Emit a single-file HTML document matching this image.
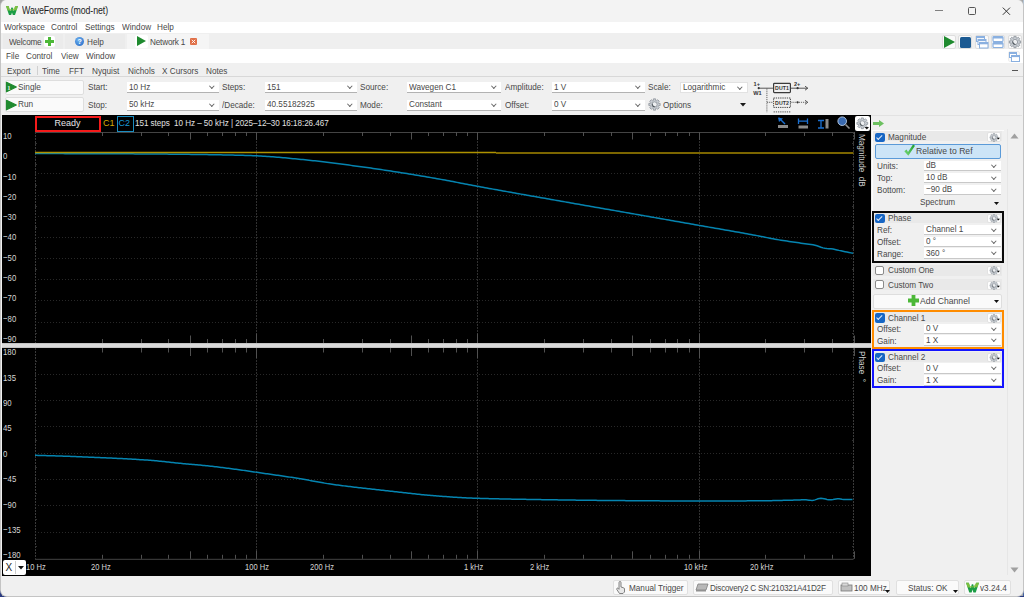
<!DOCTYPE html>
<html><head><meta charset="utf-8">
<style>
*{box-sizing:border-box;margin:0;padding:0}
html,body{width:1024px;height:597px;overflow:hidden;background:#9ea4aa}
body{position:relative;font-family:"Liberation Sans",sans-serif;font-size:9.3px;color:#484848}
.a{position:absolute}
.t{position:absolute;white-space:nowrap;line-height:10px;transform:scaleX(0.88);transform-origin:0 0}
.nt{transform:none}
.dd{position:absolute;background:#fff;border-bottom:1px solid #b2b2b2;height:11px}
.dd span{position:absolute;left:2px;top:-0.2px;line-height:10px;white-space:nowrap;transform:scaleX(0.88);transform-origin:0 0}
.dd i{position:absolute;right:5px;top:2.2px;width:3.6px;height:3.6px;border-right:0.9px solid #6a6a6a;border-bottom:0.9px solid #6a6a6a;transform:rotate(45deg)}
.btn{position:absolute;background:#fafafa;border:1px solid #dedede;border-radius:2px}
.al{position:absolute;left:2.8px;white-space:nowrap;font-size:9.5px;line-height:10px;color:#d6d6d6;transform:scaleX(0.82);transform-origin:0 0}
.xl{position:absolute;top:561.5px;white-space:nowrap;font-size:9.1px;line-height:10px;color:#d6d6d6;transform:scaleX(0.83);transform-origin:0 0}
.tri{position:absolute;width:0;height:0;border-style:solid;border-color:transparent transparent transparent #1f8a2f}
.cb{position:absolute;width:9.5px;height:9.5px;border-radius:2px;background:#1766c4}
.cb:after{content:"";position:absolute;left:3.3px;top:1.3px;width:2.2px;height:4.5px;border-right:0.8px solid #dfe8f5;border-bottom:0.8px solid #dfe8f5;transform:rotate(45deg)}
.cbe{position:absolute;width:9px;height:9px;border-radius:2px;background:#fff;border:1px solid #8a8a8a}
.grp{position:absolute;left:872px;width:132px;background:#f0f0f0}
.hdr{position:absolute;left:873px;width:129px;height:10px;background:#e9e9e9}
.gb{position:absolute;left:986.5px;width:14.5px;height:9.5px;background:#fff;border:1px solid #e2e2e2;border-radius:2px}
.lbl{position:absolute;left:877px;white-space:nowrap;line-height:10px;transform:scaleX(0.88);transform-origin:0 0}
.sb{position:absolute;top:580px;height:15px;background:#fafafa;border:1px solid #e0e0e0;border-radius:2px}
.sb span{position:absolute;top:2px;line-height:10px;white-space:nowrap;transform:scaleX(0.88);transform-origin:0 0}
</style></head><body>
<svg width="0" height="0" style="position:absolute"><defs>
<g id="gear"><path d="M3.44,-1.05 L4.91,-0.95 L4.91,0.95 L3.44,1.05 L3.18,1.69 L4.15,2.80 L2.80,4.15 L1.69,3.18 L1.05,3.44 L0.95,4.91 L-0.95,4.91 L-1.05,3.44 L-1.69,3.18 L-2.80,4.15 L-4.15,2.80 L-3.18,1.69 L-3.44,1.05 L-4.91,0.95 L-4.91,-0.95 L-3.44,-1.05 L-3.18,-1.69 L-4.15,-2.80 L-2.80,-4.15 L-1.69,-3.18 L-1.05,-3.44 L-0.95,-4.91 L0.95,-4.91 L1.05,-3.44 L1.69,-3.18 L2.80,-4.15 L4.15,-2.80 L3.18,-1.69 Z" fill="#c9ced4" stroke="#8b9299" stroke-width="0.7" stroke-linejoin="round"/><circle r="2.3" fill="#eef0f2" stroke="#7a828a" stroke-width="0.6"/><path d="M-1.6,-1.2 A2,2 0 0 0 0.9,1.9 A2.6,2.6 0 0 1 -1.6,-1.2 Z" fill="#4a5258"/></g>
</defs></svg>
<div class="a" style="left:0;top:0;width:1024px;height:1px;background:#a4a4a4"></div>
<div class="a" style="left:553px;top:0;width:178px;height:1px;background:#5a88c4"></div>
<div class="a" style="left:0;top:0;width:1.5px;height:597px;background:linear-gradient(#a0a0a0 0,#a0a0a0 70px,#4a4a4a 80px,#4a4a4a 140px,#b0b0b0 150px,#b0b0b0 560px,#2a3a80 571px,#2a3a80 597px)"></div>
<div class="a" style="left:1022.5px;top:0;width:1.5px;height:597px;background:linear-gradient(#b4c4d4 0,#b4c4d4 28px,#c8a040 32px,#506080 60px,#c0a050 100px,#405a90 160px,#4060a0 597px)"></div>
<div class="a" style="left:0;top:595.5px;width:1024px;height:1.5px;background:linear-gradient(90deg,#2a3a80 0,#2a3a80 55px,#b89a50 56px,#b89a50 69px,#606880 70px,#606880 85px,#2a3a80 86px,#2a3a80 1024px)"></div>
<div class="a" id="win" style="left:1px;top:0;width:1022px;height:596px;background:#f0f0f0;border-radius:6px;overflow:hidden;box-shadow:0 0 0 1px #c4c4c4">
<div style="position:absolute;left:-1px;top:0;width:1024px;height:597px">
  <!-- title bar -->
  <div class="a" style="left:0;top:0;width:1024px;height:21.6px;background:#f3f3f3"></div>
  <svg class="a" style="left:6px;top:6px" width="12" height="9" viewBox="0 0 12 9">
    <path d="M0,0 L2.6,0 L4.2,5.2 L5.4,1.6 L6.6,1.6 L7.8,5.2 L9.4,0 L12,0 L9,9 L6.8,9 L6,6.4 L5.2,9 L3,9 Z" fill="#1b9d45"/>
    <path d="M0,0 L2.6,0 L3.6,3.2 L7,3.6 L9.4,0 L12,0 L10.6,4.2 L1.6,4.4 Z" fill="#8cc63f" opacity="0.85"/>
  </svg>
  <div class="t" style="left:22px;top:5.5px;font-size:10px;color:#1c1c1c;letter-spacing:-0.1px">WaveForms (mod-net)</div>
  <div class="a" style="left:935px;top:10px;width:7.5px;height:1px;background:#808080"></div>
  <div class="a" style="left:968px;top:6.8px;width:7.8px;height:7.8px;border:1.1px solid #555;border-radius:1.5px"></div>
  <svg class="a" style="left:1002px;top:6.5px" width="9" height="9" viewBox="0 0 9 9"><path d="M0.8,0.6 L8,7.8 M8,0.6 L0.8,7.8" stroke="#333" stroke-width="1"/></svg>
  <!-- menu -->
  <div class="a" style="left:0;top:21.6px;width:1024px;height:11.4px;background:#fff"></div>
  <div class="t" style="left:4px;top:22px">Workspace</div>
  <div class="t" style="left:51px;top:22px">Control</div>
  <div class="t" style="left:85px;top:22px">Settings</div>
  <div class="t" style="left:122px;top:22px">Window</div>
  <div class="t" style="left:157px;top:22px">Help</div>
  <!-- tabs -->
  <div class="a" style="left:0;top:33px;width:1024px;height:16px;background:#efefef"></div>
  <div class="a" style="left:3px;top:34px;width:60px;height:15px;background:#ebebeb"></div>
  <div class="a" style="left:65px;top:34px;width:60px;height:15px;background:#ebebeb"></div>
  <div class="a" style="left:127px;top:34px;width:82px;height:15px;background:#f5f5f5"></div>
  <div class="t" style="left:9px;top:37px;letter-spacing:-0.25px">Welcome</div>
  <div class="a" style="left:44px;top:36px;width:11px;height:11px;background:#fff;border-radius:2px"></div>
  <svg class="a" style="left:45px;top:37px" width="9" height="9" viewBox="0 0 9 9"><path d="M3,0 H6 V3 H9 V6 H6 V9 H3 V6 H0 V3 H3 Z" fill="#4cb838"/></svg>
  <div class="a" style="left:75px;top:37px;width:9px;height:9px;border-radius:50%;background:radial-gradient(circle at 40% 35%,#6fb3f0,#1f63c2)"></div>
  <div class="t nt" style="left:77.5px;top:36.5px;font-size:7px;color:#fff;font-weight:bold">?</div>
  <div class="t" style="left:87px;top:37px">Help</div>
  <div class="a" style="left:135px;top:35px;width:13px;height:13px;background:#fff;border-radius:2px"></div>
  <div class="tri" style="left:137px;top:36px;border-width:5.5px 0 5.5px 9px"></div>
  <div class="t" style="left:150px;top:37px;letter-spacing:-0.2px">Network 1</div>
  <div class="a" style="left:190px;top:37.5px;width:7px;height:7px;background:#e07048;border-radius:1px"></div>
  <svg class="a" style="left:191px;top:38.5px" width="5" height="5" viewBox="0 0 5 5"><path d="M0.8,0.8 L4.2,4.2 M4.2,0.8 L0.8,4.2" stroke="#fff" stroke-width="0.9"/></svg>
  <!-- top-right toolbar -->
  <div class="btn" style="left:942px;top:35px;width:14px;height:14px"></div>
  <div class="tri" style="left:944px;top:36px;border-width:6px 0 6px 11px"></div>
  <div class="btn" style="left:958px;top:35px;width:14px;height:14px"></div>
  <div class="a" style="left:960px;top:36.5px;width:11px;height:11px;background:#1b5a92;border-radius:1.5px"></div>
  <div class="btn" style="left:975px;top:35px;width:14px;height:14px"></div>
  <svg class="a" style="left:975px;top:35px" width="14" height="14" viewBox="0 0 14 14">
    <rect x="1.5" y="1.5" width="8" height="5" fill="#fff" stroke="#8ab0e0"/><rect x="1.5" y="1.5" width="8" height="1.6" fill="#8ab0e0"/>
    <rect x="3" y="4.5" width="8" height="5" fill="#fff" stroke="#8ab0e0"/><rect x="3" y="4.5" width="8" height="1.6" fill="#8ab0e0"/>
    <rect x="4.5" y="7.5" width="8.5" height="5.5" fill="#fff" stroke="#8ab0e0"/><rect x="4.5" y="7.5" width="8.5" height="1.8" fill="#8ab0e0"/>
  </svg>
  <div class="btn" style="left:991px;top:35px;width:14px;height:14px"></div>
  <svg class="a" style="left:991px;top:35px" width="14" height="14" viewBox="0 0 14 14">
    <rect x="2" y="1.5" width="10" height="5" rx="1" fill="#fff" stroke="#8ab0e0" stroke-width="1.2"/><rect x="2" y="1.5" width="10" height="2" fill="#8ab0e0"/>
    <rect x="2" y="7.5" width="10" height="5" rx="1" fill="#fff" stroke="#8ab0e0" stroke-width="1.2"/><rect x="2" y="7.5" width="10" height="2" fill="#8ab0e0"/>
  </svg>
  <div class="btn" style="left:1008px;top:35px;width:14px;height:14px"></div>
  <svg class="a" style="left:1008px;top:35px" width="14" height="14" viewBox="0 0 14 14"><use href="#gear" transform="translate(7,7) scale(1.15)"/></svg>
  <!-- file menu -->
  <div class="a" style="left:0;top:49px;width:1024px;height:14px;background:#fff"></div>
  <div class="t" style="left:5.5px;top:51px">File</div>
  <div class="t" style="left:26px;top:51px">Control</div>
  <div class="t" style="left:61px;top:51px">View</div>
  <div class="t" style="left:86px;top:51px">Window</div>
  <div class="btn" style="left:1008px;top:51px;width:12px;height:11px;border-color:#eee"></div>
  <svg class="a" style="left:1009px;top:52px" width="11" height="10" viewBox="0 0 11 10">
    <rect x="0.5" y="0.5" width="7" height="5" fill="#fff" stroke="#8ab0e0"/><rect x="0.5" y="0.5" width="7" height="1.5" fill="#8ab0e0"/>
    <rect x="2.5" y="3.5" width="8" height="6" fill="#fff" stroke="#8ab0e0"/><rect x="2.5" y="3.5" width="8" height="1.6" fill="#8ab0e0"/>
  </svg>
  <!-- export row -->
  <div class="a" style="left:0;top:63px;width:1024px;height:14px;background:#f0f0f0;border-bottom:1px solid #d8d8d8"></div>
  <div class="t" style="left:7px;top:65.5px">Export</div>
  <div class="a" style="left:37px;top:66px;width:1px;height:9px;background:#d0d0d0"></div>
  <div class="t" style="left:42px;top:65.5px">Time</div>
  <div class="t" style="left:68.5px;top:65.5px">FFT</div>
  <div class="t" style="left:91.5px;top:65.5px">Nyquist</div>
  <div class="t" style="left:127.5px;top:65.5px">Nichols</div>
  <div class="t" style="left:162px;top:65.5px">X Cursors</div>
  <div class="t" style="left:206px;top:65.5px">Notes</div>
  <div class="a" style="left:1012px;top:70px;width:6px;height:1px;background:#555"></div>
  <!-- param rows -->
  <div class="btn" style="left:5px;top:80px;width:79px;height:14.5px"></div>
  <svg class="a" style="left:5px;top:80.5px" width="13" height="12" viewBox="0 0 13 12"><path d="M1.5,1.3 L11.3,6 L1.5,10.8 Z" fill="#1f8a2f" stroke="#1f8a2f" stroke-width="1.2" stroke-linejoin="round"/><text x="2.3" y="8.6" font-family="Liberation Serif" font-weight="bold" font-size="6.5" fill="#e8f0e8">1</text></svg>
  <div class="t" style="left:18px;top:81.5px;font-size:9.4px">Single</div>
  <div class="btn" style="left:5px;top:97px;width:79px;height:15px"></div>
  <svg class="a" style="left:5px;top:98.5px" width="13" height="12" viewBox="0 0 13 12"><path d="M1.5,1.3 L11.3,6 L1.5,10.8 Z" fill="#1f8a2f" stroke="#1f8a2f" stroke-width="1.2" stroke-linejoin="round"/></svg>
  <div class="t" style="left:18px;top:99px;font-size:9.4px">Run</div>

  <div class="t" style="left:88px;top:82px">Start:</div>
  <div class="t" style="left:88px;top:99.5px">Stop:</div>
  <div class="dd" style="left:127px;top:82px;width:92px"><span>10 Hz</span><i></i></div>
  <div class="dd" style="left:127px;top:99.5px;width:92px"><span>50 kHz</span><i></i></div>
  <div class="t" style="left:221.5px;top:82px">Steps:</div>
  <div class="t" style="left:221.5px;top:99.5px">/Decade:</div>
  <div class="dd" style="left:265px;top:82px;width:92px"><span>151</span><i></i></div>
  <div class="dd" style="left:265px;top:99.5px;width:92px"><span>40.55182925</span><i></i></div>
  <div class="t" style="left:360px;top:82px">Source:</div>
  <div class="t" style="left:360px;top:99.5px">Mode:</div>
  <div class="dd" style="left:407px;top:82px;width:94px"><span>Wavegen C1</span><i></i></div>
  <div class="dd" style="left:407px;top:99.5px;width:94px"><span>Constant</span><i></i></div>
  <div class="t" style="left:504.5px;top:82px">Amplitude:</div>
  <div class="t" style="left:504.5px;top:99.5px">Offset:</div>
  <div class="dd" style="left:551.5px;top:82px;width:93px"><span>1 V</span><i></i></div>
  <div class="dd" style="left:551.5px;top:99.5px;width:93px"><span>0 V</span><i></i></div>
  <div class="t" style="left:648px;top:82px">Scale:</div>
  <div class="dd" style="left:679.5px;top:81.5px;width:68.5px;border:1px solid #e2e2e2;height:11px"><span>Logarithmic</span><i></i></div>
  <svg class="a" style="left:648px;top:97.5px" width="13" height="13" viewBox="0 0 13 13"><use href="#gear" transform="translate(6.5,6.5) scale(1.15)"/></svg>
  <div class="t" style="left:663px;top:99.5px">Options</div>
  <svg class="a" style="left:740px;top:102.5px" width="6" height="4" viewBox="0 0 6 4"><path d="M0,0 H6 L3,3.5 Z" fill="#1a1a1a"/></svg>
  <!-- DUT diagram -->
  <svg class="a" style="left:750px;top:79px" width="62" height="35" viewBox="0 0 62 35" font-family="Liberation Sans" font-weight="bold">
    <text x="3.6" y="6.8" font-size="5.6" fill="#333">1+</text>
    <text x="3.2" y="15.9" font-size="5.6" fill="#333">W1</text>
    <circle cx="8.7" cy="9.2" r="1.1" fill="#333"/>
    <line x1="8.7" y1="9.2" x2="23.4" y2="9.2" stroke="#444" stroke-width="0.9"/>
    <rect x="23.6" y="4.4" width="16.8" height="9.2" rx="0.8" fill="none" stroke="#3a3a3a" stroke-width="1.2"/>
    <text x="25" y="11.2" font-size="5.2" fill="#333" textLength="14">DUT1</text>
    <line x1="40.4" y1="9.2" x2="57.5" y2="9.2" stroke="#444" stroke-width="0.9"/>
    <path d="M55,7.2 L57.8,9.2 L55,11.2" fill="none" stroke="#444" stroke-width="0.9"/>
    <circle cx="47.6" cy="9.2" r="1.1" fill="#333"/>
    <text x="44" y="6.8" font-size="5.6" fill="#333">2+</text>
    <line x1="16.9" y1="9.5" x2="16.9" y2="33.2" stroke="#555" stroke-width="0.9" stroke-dasharray="1.2 0.9"/>
    <line x1="17" y1="23.3" x2="23.4" y2="23.3" stroke="#555" stroke-width="0.9" stroke-dasharray="1.2 0.9"/>
    <rect x="23.6" y="19" width="16.8" height="9.4" fill="none" stroke="#444" stroke-width="1" stroke-dasharray="1.3 0.9"/>
    <text x="25" y="25.9" font-size="5.2" fill="#333" textLength="14">DUT2</text>
    <line x1="40.4" y1="23.3" x2="57.5" y2="23.3" stroke="#555" stroke-width="0.9" stroke-dasharray="1.2 0.9"/>
    <path d="M55,21.3 L57.8,23.3 L55,25.3" fill="none" stroke="#444" stroke-width="0.9"/>
    <circle cx="47.6" cy="23.3" r="1.1" fill="#333"/>
    <line x1="23.6" y1="32.9" x2="40.4" y2="32.9" stroke="#555" stroke-width="1" stroke-dasharray="1.3 0.9"/>
  </svg>

  <!-- plot area -->
  <div class="a" style="left:2px;top:115px;width:869px;height:461px;background:#000"></div>
  <svg class="a" style="left:0;top:0" width="1024" height="597"><line x1="35.0" y1="132.5" x2="853.5" y2="132.5" stroke="#444" stroke-width="1"/><line x1="35.0" y1="559.3" x2="853.5" y2="559.3" stroke="#444" stroke-width="1"/><line x1="35.5" y1="132.0" x2="35.5" y2="343.5" stroke="#3a3a3a" stroke-width="1" stroke-dasharray="2 1"/><line x1="853.5" y1="132.0" x2="853.5" y2="343.5" stroke="#3a3a3a" stroke-width="1" stroke-dasharray="2 1"/><line x1="35.5" y1="348.0" x2="35.5" y2="558.8" stroke="#3a3a3a" stroke-width="1" stroke-dasharray="2 1"/><line x1="853.5" y1="348.0" x2="853.5" y2="558.8" stroke="#3a3a3a" stroke-width="1" stroke-dasharray="2 1"/><line x1="35.0" y1="152.5" x2="853.5" y2="152.5" stroke="#282828" stroke-width="1" stroke-dasharray="1 2"/><line x1="35.0" y1="173.5" x2="853.5" y2="173.5" stroke="#282828" stroke-width="1" stroke-dasharray="1 2"/><line x1="35.0" y1="195.5" x2="853.5" y2="195.5" stroke="#282828" stroke-width="1" stroke-dasharray="1 2"/><line x1="35.0" y1="216.5" x2="853.5" y2="216.5" stroke="#282828" stroke-width="1" stroke-dasharray="1 2"/><line x1="35.0" y1="237.5" x2="853.5" y2="237.5" stroke="#282828" stroke-width="1" stroke-dasharray="1 2"/><line x1="35.0" y1="258.5" x2="853.5" y2="258.5" stroke="#282828" stroke-width="1" stroke-dasharray="1 2"/><line x1="35.0" y1="279.5" x2="853.5" y2="279.5" stroke="#282828" stroke-width="1" stroke-dasharray="1 2"/><line x1="35.0" y1="300.5" x2="853.5" y2="300.5" stroke="#282828" stroke-width="1" stroke-dasharray="1 2"/><line x1="35.0" y1="322.5" x2="853.5" y2="322.5" stroke="#282828" stroke-width="1" stroke-dasharray="1 2"/><line x1="35.0" y1="374.5" x2="853.5" y2="374.5" stroke="#282828" stroke-width="1" stroke-dasharray="1 2"/><line x1="35.0" y1="400.5" x2="853.5" y2="400.5" stroke="#282828" stroke-width="1" stroke-dasharray="1 2"/><line x1="35.0" y1="426.5" x2="853.5" y2="426.5" stroke="#282828" stroke-width="1" stroke-dasharray="1 2"/><line x1="35.0" y1="453.5" x2="853.5" y2="453.5" stroke="#282828" stroke-width="1" stroke-dasharray="1 2"/><line x1="35.0" y1="479.5" x2="853.5" y2="479.5" stroke="#282828" stroke-width="1" stroke-dasharray="1 2"/><line x1="35.0" y1="505.5" x2="853.5" y2="505.5" stroke="#282828" stroke-width="1" stroke-dasharray="1 2"/><line x1="35.0" y1="532.5" x2="853.5" y2="532.5" stroke="#282828" stroke-width="1" stroke-dasharray="1 2"/><line x1="256.5" y1="132.0" x2="256.5" y2="343.5" stroke="#303030" stroke-width="1" stroke-dasharray="2 1"/><line x1="256.5" y1="348.0" x2="256.5" y2="558.8" stroke="#303030" stroke-width="1" stroke-dasharray="2 1"/><line x1="256.5" y1="132.0" x2="256.5" y2="140.0" stroke="#505050" stroke-width="1"/><line x1="256.5" y1="550.8" x2="256.5" y2="558.8" stroke="#505050" stroke-width="1"/><line x1="256.5" y1="333.5" x2="256.5" y2="358.0" stroke="#505050" stroke-width="1"/><line x1="477.5" y1="132.0" x2="477.5" y2="343.5" stroke="#303030" stroke-width="1" stroke-dasharray="2 1"/><line x1="477.5" y1="348.0" x2="477.5" y2="558.8" stroke="#303030" stroke-width="1" stroke-dasharray="2 1"/><line x1="477.5" y1="132.0" x2="477.5" y2="140.0" stroke="#505050" stroke-width="1"/><line x1="477.5" y1="550.8" x2="477.5" y2="558.8" stroke="#505050" stroke-width="1"/><line x1="477.5" y1="333.5" x2="477.5" y2="358.0" stroke="#505050" stroke-width="1"/><line x1="699.5" y1="132.0" x2="699.5" y2="343.5" stroke="#303030" stroke-width="1" stroke-dasharray="2 1"/><line x1="699.5" y1="348.0" x2="699.5" y2="558.8" stroke="#303030" stroke-width="1" stroke-dasharray="2 1"/><line x1="699.5" y1="132.0" x2="699.5" y2="140.0" stroke="#505050" stroke-width="1"/><line x1="699.5" y1="550.8" x2="699.5" y2="558.8" stroke="#505050" stroke-width="1"/><line x1="699.5" y1="333.5" x2="699.5" y2="358.0" stroke="#505050" stroke-width="1"/><line x1="102.5" y1="132.0" x2="102.5" y2="136.0" stroke="#505050" stroke-width="1"/><line x1="102.5" y1="554.8" x2="102.5" y2="558.8" stroke="#505050" stroke-width="1"/><line x1="102.5" y1="339.0" x2="102.5" y2="352.5" stroke="#505050" stroke-width="1"/><line x1="141.5" y1="132.0" x2="141.5" y2="136.0" stroke="#505050" stroke-width="1"/><line x1="141.5" y1="554.8" x2="141.5" y2="558.8" stroke="#505050" stroke-width="1"/><line x1="141.5" y1="339.0" x2="141.5" y2="352.5" stroke="#505050" stroke-width="1"/><line x1="168.5" y1="132.0" x2="168.5" y2="136.0" stroke="#505050" stroke-width="1"/><line x1="168.5" y1="554.8" x2="168.5" y2="558.8" stroke="#505050" stroke-width="1"/><line x1="168.5" y1="339.0" x2="168.5" y2="352.5" stroke="#505050" stroke-width="1"/><line x1="190.5" y1="132.0" x2="190.5" y2="139.5" stroke="#505050" stroke-width="1"/><line x1="190.5" y1="551.3" x2="190.5" y2="558.8" stroke="#505050" stroke-width="1"/><line x1="190.5" y1="335.5" x2="190.5" y2="356.0" stroke="#505050" stroke-width="1"/><line x1="207.5" y1="132.0" x2="207.5" y2="136.0" stroke="#505050" stroke-width="1"/><line x1="207.5" y1="554.8" x2="207.5" y2="558.8" stroke="#505050" stroke-width="1"/><line x1="207.5" y1="339.0" x2="207.5" y2="352.5" stroke="#505050" stroke-width="1"/><line x1="222.5" y1="132.0" x2="222.5" y2="136.0" stroke="#505050" stroke-width="1"/><line x1="222.5" y1="554.8" x2="222.5" y2="558.8" stroke="#505050" stroke-width="1"/><line x1="222.5" y1="339.0" x2="222.5" y2="352.5" stroke="#505050" stroke-width="1"/><line x1="235.5" y1="132.0" x2="235.5" y2="136.0" stroke="#505050" stroke-width="1"/><line x1="235.5" y1="554.8" x2="235.5" y2="558.8" stroke="#505050" stroke-width="1"/><line x1="235.5" y1="339.0" x2="235.5" y2="352.5" stroke="#505050" stroke-width="1"/><line x1="246.5" y1="132.0" x2="246.5" y2="136.0" stroke="#505050" stroke-width="1"/><line x1="246.5" y1="554.8" x2="246.5" y2="558.8" stroke="#505050" stroke-width="1"/><line x1="246.5" y1="339.0" x2="246.5" y2="352.5" stroke="#505050" stroke-width="1"/><line x1="323.5" y1="132.0" x2="323.5" y2="136.0" stroke="#505050" stroke-width="1"/><line x1="323.5" y1="554.8" x2="323.5" y2="558.8" stroke="#505050" stroke-width="1"/><line x1="323.5" y1="339.0" x2="323.5" y2="352.5" stroke="#505050" stroke-width="1"/><line x1="362.5" y1="132.0" x2="362.5" y2="136.0" stroke="#505050" stroke-width="1"/><line x1="362.5" y1="554.8" x2="362.5" y2="558.8" stroke="#505050" stroke-width="1"/><line x1="362.5" y1="339.0" x2="362.5" y2="352.5" stroke="#505050" stroke-width="1"/><line x1="390.5" y1="132.0" x2="390.5" y2="136.0" stroke="#505050" stroke-width="1"/><line x1="390.5" y1="554.8" x2="390.5" y2="558.8" stroke="#505050" stroke-width="1"/><line x1="390.5" y1="339.0" x2="390.5" y2="352.5" stroke="#505050" stroke-width="1"/><line x1="411.5" y1="132.0" x2="411.5" y2="139.5" stroke="#505050" stroke-width="1"/><line x1="411.5" y1="551.3" x2="411.5" y2="558.8" stroke="#505050" stroke-width="1"/><line x1="411.5" y1="335.5" x2="411.5" y2="356.0" stroke="#505050" stroke-width="1"/><line x1="428.5" y1="132.0" x2="428.5" y2="136.0" stroke="#505050" stroke-width="1"/><line x1="428.5" y1="554.8" x2="428.5" y2="558.8" stroke="#505050" stroke-width="1"/><line x1="428.5" y1="339.0" x2="428.5" y2="352.5" stroke="#505050" stroke-width="1"/><line x1="443.5" y1="132.0" x2="443.5" y2="136.0" stroke="#505050" stroke-width="1"/><line x1="443.5" y1="554.8" x2="443.5" y2="558.8" stroke="#505050" stroke-width="1"/><line x1="443.5" y1="339.0" x2="443.5" y2="352.5" stroke="#505050" stroke-width="1"/><line x1="456.5" y1="132.0" x2="456.5" y2="136.0" stroke="#505050" stroke-width="1"/><line x1="456.5" y1="554.8" x2="456.5" y2="558.8" stroke="#505050" stroke-width="1"/><line x1="456.5" y1="339.0" x2="456.5" y2="352.5" stroke="#505050" stroke-width="1"/><line x1="467.5" y1="132.0" x2="467.5" y2="136.0" stroke="#505050" stroke-width="1"/><line x1="467.5" y1="554.8" x2="467.5" y2="558.8" stroke="#505050" stroke-width="1"/><line x1="467.5" y1="339.0" x2="467.5" y2="352.5" stroke="#505050" stroke-width="1"/><line x1="544.5" y1="132.0" x2="544.5" y2="136.0" stroke="#505050" stroke-width="1"/><line x1="544.5" y1="554.8" x2="544.5" y2="558.8" stroke="#505050" stroke-width="1"/><line x1="544.5" y1="339.0" x2="544.5" y2="352.5" stroke="#505050" stroke-width="1"/><line x1="583.5" y1="132.0" x2="583.5" y2="136.0" stroke="#505050" stroke-width="1"/><line x1="583.5" y1="554.8" x2="583.5" y2="558.8" stroke="#505050" stroke-width="1"/><line x1="583.5" y1="339.0" x2="583.5" y2="352.5" stroke="#505050" stroke-width="1"/><line x1="611.5" y1="132.0" x2="611.5" y2="136.0" stroke="#505050" stroke-width="1"/><line x1="611.5" y1="554.8" x2="611.5" y2="558.8" stroke="#505050" stroke-width="1"/><line x1="611.5" y1="339.0" x2="611.5" y2="352.5" stroke="#505050" stroke-width="1"/><line x1="632.5" y1="132.0" x2="632.5" y2="139.5" stroke="#505050" stroke-width="1"/><line x1="632.5" y1="551.3" x2="632.5" y2="558.8" stroke="#505050" stroke-width="1"/><line x1="632.5" y1="335.5" x2="632.5" y2="356.0" stroke="#505050" stroke-width="1"/><line x1="650.5" y1="132.0" x2="650.5" y2="136.0" stroke="#505050" stroke-width="1"/><line x1="650.5" y1="554.8" x2="650.5" y2="558.8" stroke="#505050" stroke-width="1"/><line x1="650.5" y1="339.0" x2="650.5" y2="352.5" stroke="#505050" stroke-width="1"/><line x1="665.5" y1="132.0" x2="665.5" y2="136.0" stroke="#505050" stroke-width="1"/><line x1="665.5" y1="554.8" x2="665.5" y2="558.8" stroke="#505050" stroke-width="1"/><line x1="665.5" y1="339.0" x2="665.5" y2="352.5" stroke="#505050" stroke-width="1"/><line x1="677.5" y1="132.0" x2="677.5" y2="136.0" stroke="#505050" stroke-width="1"/><line x1="677.5" y1="554.8" x2="677.5" y2="558.8" stroke="#505050" stroke-width="1"/><line x1="677.5" y1="339.0" x2="677.5" y2="352.5" stroke="#505050" stroke-width="1"/><line x1="689.5" y1="132.0" x2="689.5" y2="136.0" stroke="#505050" stroke-width="1"/><line x1="689.5" y1="554.8" x2="689.5" y2="558.8" stroke="#505050" stroke-width="1"/><line x1="689.5" y1="339.0" x2="689.5" y2="352.5" stroke="#505050" stroke-width="1"/><line x1="765.5" y1="132.0" x2="765.5" y2="136.0" stroke="#505050" stroke-width="1"/><line x1="765.5" y1="554.8" x2="765.5" y2="558.8" stroke="#505050" stroke-width="1"/><line x1="765.5" y1="339.0" x2="765.5" y2="352.5" stroke="#505050" stroke-width="1"/><line x1="804.5" y1="132.0" x2="804.5" y2="136.0" stroke="#505050" stroke-width="1"/><line x1="804.5" y1="554.8" x2="804.5" y2="558.8" stroke="#505050" stroke-width="1"/><line x1="804.5" y1="339.0" x2="804.5" y2="352.5" stroke="#505050" stroke-width="1"/><line x1="832.5" y1="132.0" x2="832.5" y2="136.0" stroke="#505050" stroke-width="1"/><line x1="832.5" y1="554.8" x2="832.5" y2="558.8" stroke="#505050" stroke-width="1"/><line x1="832.5" y1="339.0" x2="832.5" y2="352.5" stroke="#505050" stroke-width="1"/><line x1="854.5" y1="132.0" x2="854.5" y2="139.5" stroke="#505050" stroke-width="1"/><line x1="854.5" y1="551.3" x2="854.5" y2="558.8" stroke="#505050" stroke-width="1"/><line x1="854.5" y1="335.5" x2="854.5" y2="356.0" stroke="#505050" stroke-width="1"/><line x1="35.0" y1="143.5" x2="37.0" y2="143.5" stroke="#333" stroke-width="1"/><line x1="852.0" y1="143.5" x2="854.0" y2="143.5" stroke="#333" stroke-width="1"/><line x1="35.0" y1="164.5" x2="37.0" y2="164.5" stroke="#333" stroke-width="1"/><line x1="852.0" y1="164.5" x2="854.0" y2="164.5" stroke="#333" stroke-width="1"/><line x1="35.0" y1="185.5" x2="37.0" y2="185.5" stroke="#333" stroke-width="1"/><line x1="852.0" y1="185.5" x2="854.0" y2="185.5" stroke="#333" stroke-width="1"/><line x1="35.0" y1="206.5" x2="37.0" y2="206.5" stroke="#333" stroke-width="1"/><line x1="852.0" y1="206.5" x2="854.0" y2="206.5" stroke="#333" stroke-width="1"/><line x1="35.0" y1="227.5" x2="37.0" y2="227.5" stroke="#333" stroke-width="1"/><line x1="852.0" y1="227.5" x2="854.0" y2="227.5" stroke="#333" stroke-width="1"/><line x1="35.0" y1="248.5" x2="37.0" y2="248.5" stroke="#333" stroke-width="1"/><line x1="852.0" y1="248.5" x2="854.0" y2="248.5" stroke="#333" stroke-width="1"/><line x1="35.0" y1="269.5" x2="37.0" y2="269.5" stroke="#333" stroke-width="1"/><line x1="852.0" y1="269.5" x2="854.0" y2="269.5" stroke="#333" stroke-width="1"/><line x1="35.0" y1="291.5" x2="37.0" y2="291.5" stroke="#333" stroke-width="1"/><line x1="852.0" y1="291.5" x2="854.0" y2="291.5" stroke="#333" stroke-width="1"/><line x1="35.0" y1="312.5" x2="37.0" y2="312.5" stroke="#333" stroke-width="1"/><line x1="852.0" y1="312.5" x2="854.0" y2="312.5" stroke="#333" stroke-width="1"/><line x1="35.0" y1="333.5" x2="37.0" y2="333.5" stroke="#333" stroke-width="1"/><line x1="852.0" y1="333.5" x2="854.0" y2="333.5" stroke="#333" stroke-width="1"/><line x1="35.0" y1="361.5" x2="37.0" y2="361.5" stroke="#333" stroke-width="1"/><line x1="852.0" y1="361.5" x2="854.0" y2="361.5" stroke="#333" stroke-width="1"/><line x1="35.0" y1="388.5" x2="37.0" y2="388.5" stroke="#333" stroke-width="1"/><line x1="852.0" y1="388.5" x2="854.0" y2="388.5" stroke="#333" stroke-width="1"/><line x1="35.0" y1="414.5" x2="37.0" y2="414.5" stroke="#333" stroke-width="1"/><line x1="852.0" y1="414.5" x2="854.0" y2="414.5" stroke="#333" stroke-width="1"/><line x1="35.0" y1="440.5" x2="37.0" y2="440.5" stroke="#333" stroke-width="1"/><line x1="852.0" y1="440.5" x2="854.0" y2="440.5" stroke="#333" stroke-width="1"/><line x1="35.0" y1="467.5" x2="37.0" y2="467.5" stroke="#333" stroke-width="1"/><line x1="852.0" y1="467.5" x2="854.0" y2="467.5" stroke="#333" stroke-width="1"/><line x1="35.0" y1="493.5" x2="37.0" y2="493.5" stroke="#333" stroke-width="1"/><line x1="852.0" y1="493.5" x2="854.0" y2="493.5" stroke="#333" stroke-width="1"/><line x1="35.0" y1="519.5" x2="37.0" y2="519.5" stroke="#333" stroke-width="1"/><line x1="852.0" y1="519.5" x2="854.0" y2="519.5" stroke="#333" stroke-width="1"/><line x1="35.0" y1="546.5" x2="37.0" y2="546.5" stroke="#333" stroke-width="1"/><line x1="852.0" y1="546.5" x2="854.0" y2="546.5" stroke="#333" stroke-width="1"/><polyline fill="none" stroke="#0584b0" stroke-width="1.5" points="35.0,153.60 37.0,153.60 39.0,153.60 41.0,153.60 43.0,153.60 45.0,153.60 47.0,153.60 49.0,153.61 51.0,153.61 53.0,153.61 55.0,153.61 57.0,153.61 59.0,153.62 61.0,153.62 63.0,153.62 65.0,153.63 67.0,153.63 69.0,153.63 71.0,153.64 73.0,153.64 75.0,153.64 77.0,153.65 79.0,153.65 81.0,153.66 83.0,153.66 85.0,153.66 87.0,153.67 89.0,153.67 91.0,153.68 93.0,153.68 95.0,153.69 97.0,153.69 99.0,153.70 101.0,153.70 103.0,153.71 105.0,153.71 107.0,153.72 109.0,153.73 111.0,153.74 113.0,153.75 115.0,153.76 117.0,153.77 119.0,153.78 121.0,153.79 123.0,153.80 125.0,153.81 127.0,153.82 129.0,153.84 131.0,153.85 133.0,153.86 135.0,153.88 137.0,153.89 139.0,153.90 141.0,153.92 143.0,153.93 145.0,153.95 147.0,153.96 149.0,153.98 151.0,153.99 153.0,154.01 155.0,154.02 157.0,154.04 159.0,154.05 161.0,154.07 163.0,154.09 165.0,154.11 167.0,154.12 169.0,154.14 171.0,154.16 173.0,154.18 175.0,154.20 177.0,154.22 179.0,154.24 181.0,154.26 183.0,154.28 185.0,154.31 187.0,154.33 189.0,154.35 191.0,154.38 193.0,154.40 195.0,154.43 197.0,154.46 199.0,154.49 201.0,154.51 203.0,154.54 205.0,154.57 207.0,154.60 209.0,154.64 211.0,154.67 213.0,154.70 215.0,154.74 217.0,154.77 219.0,154.81 221.0,154.85 223.0,154.89 225.0,154.93 227.0,154.97 229.0,155.01 231.0,155.06 233.0,155.11 235.0,155.16 237.0,155.21 239.0,155.26 241.0,155.32 243.0,155.37 245.0,155.43 247.0,155.49 249.0,155.56 251.0,155.62 253.0,155.69 255.0,155.76 257.0,155.84 259.0,155.92 261.0,156.02 263.0,156.13 265.0,156.25 267.0,156.38 269.0,156.52 271.0,156.66 273.0,156.82 275.0,156.98 277.0,157.14 279.0,157.32 281.0,157.49 283.0,157.68 285.0,157.86 287.0,158.05 289.0,158.24 291.0,158.43 293.0,158.63 295.0,158.82 297.0,159.01 299.0,159.20 301.0,159.40 303.0,159.59 305.0,159.79 307.0,160.00 309.0,160.21 311.0,160.42 313.0,160.64 315.0,160.86 317.0,161.09 319.0,161.32 321.0,161.55 323.0,161.79 325.0,162.03 327.0,162.28 329.0,162.52 331.0,162.77 333.0,163.02 335.0,163.28 337.0,163.53 339.0,163.79 341.0,164.05 343.0,164.32 345.0,164.58 347.0,164.85 349.0,165.11 351.0,165.38 353.0,165.65 355.0,165.92 357.0,166.19 359.0,166.46 361.0,166.73 363.0,167.00 365.0,167.27 367.0,167.55 369.0,167.83 371.0,168.11 373.0,168.40 375.0,168.69 377.0,168.98 379.0,169.28 381.0,169.57 383.0,169.87 385.0,170.18 387.0,170.48 389.0,170.79 391.0,171.09 393.0,171.40 395.0,171.72 397.0,172.03 399.0,172.34 401.0,172.66 403.0,172.97 405.0,173.29 407.0,173.61 409.0,173.94 411.0,174.26 413.0,174.59 415.0,174.92 417.0,175.25 419.0,175.58 421.0,175.92 423.0,176.25 425.0,176.59 427.0,176.93 429.0,177.28 431.0,177.62 433.0,177.97 435.0,178.32 437.0,178.67 439.0,179.02 441.0,179.38 443.0,179.74 445.0,180.11 447.0,180.48 449.0,180.85 451.0,181.23 453.0,181.61 455.0,182.00 457.0,182.38 459.0,182.77 461.0,183.15 463.0,183.54 465.0,183.93 467.0,184.31 469.0,184.70 471.0,185.08 473.0,185.45 475.0,185.83 477.0,186.20 479.0,186.57 481.0,186.94 483.0,187.30 485.0,187.67 487.0,188.03 489.0,188.39 491.0,188.76 493.0,189.12 495.0,189.48 497.0,189.84 499.0,190.20 501.0,190.56 503.0,190.92 505.0,191.28 507.0,191.63 509.0,191.99 511.0,192.35 513.0,192.70 515.0,193.06 517.0,193.41 519.0,193.77 521.0,194.12 523.0,194.48 525.0,194.83 527.0,195.18 529.0,195.54 531.0,195.89 533.0,196.24 535.0,196.59 537.0,196.95 539.0,197.30 541.0,197.65 543.0,198.00 545.0,198.35 547.0,198.71 549.0,199.06 551.0,199.41 553.0,199.76 555.0,200.12 557.0,200.47 559.0,200.82 561.0,201.18 563.0,201.53 565.0,201.88 567.0,202.23 569.0,202.59 571.0,202.94 573.0,203.29 575.0,203.64 577.0,203.99 579.0,204.34 581.0,204.69 583.0,205.05 585.0,205.40 587.0,205.75 589.0,206.10 591.0,206.44 593.0,206.79 595.0,207.14 597.0,207.49 599.0,207.84 601.0,208.19 603.0,208.54 605.0,208.89 607.0,209.24 609.0,209.59 611.0,209.94 613.0,210.28 615.0,210.63 617.0,210.98 619.0,211.33 621.0,211.68 623.0,212.03 625.0,212.38 627.0,212.73 629.0,213.08 631.0,213.42 633.0,213.77 635.0,214.12 637.0,214.47 639.0,214.82 641.0,215.17 643.0,215.52 645.0,215.87 647.0,216.22 649.0,216.57 651.0,216.92 653.0,217.27 655.0,217.62 657.0,217.97 659.0,218.32 661.0,218.68 663.0,219.03 665.0,219.38 667.0,219.73 669.0,220.08 671.0,220.44 673.0,220.79 675.0,221.14 677.0,221.49 679.0,221.84 681.0,222.20 683.0,222.55 685.0,222.90 687.0,223.26 689.0,223.61 691.0,223.96 693.0,224.32 695.0,224.67 697.0,225.02 699.0,225.38 701.0,225.73 703.0,226.08 705.0,226.43 707.0,226.78 709.0,227.13 711.0,227.47 713.0,227.82 715.0,228.17 717.0,228.51 719.0,228.86 721.0,229.21 723.0,229.55 725.0,229.90 727.0,230.25 729.0,230.60 731.0,230.94 733.0,231.29 735.0,231.65 737.0,232.00 739.0,232.35 741.0,232.71 743.0,233.07 745.0,233.43 747.0,233.79 749.0,234.15 751.0,234.52 753.0,234.89 755.0,235.26 757.0,235.63 759.0,236.01 761.0,236.39 763.0,236.79 765.0,237.21 767.0,237.62 769.0,238.04 771.0,238.45 773.0,238.84 775.0,239.20 777.0,239.54 779.0,239.87 781.0,240.19 783.0,240.51 785.0,240.81 787.0,241.11 789.0,241.40 791.0,241.69 793.0,241.98 795.0,242.27 797.0,242.56 799.0,242.85 801.0,243.15 803.0,243.42 805.0,243.67 807.0,243.93 809.0,244.20 811.0,244.49 813.0,244.82 815.0,245.20 817.0,245.74 819.0,246.46 821.0,247.22 823.0,247.88 825.0,248.30 827.0,248.50 829.0,248.64 831.0,248.79 833.0,249.04 835.0,249.43 837.0,249.90 839.0,250.38 841.0,250.81 843.0,251.23 845.0,251.65 847.0,252.06 849.0,252.48 851.0,252.89 853.0,253.30"/><line x1="35.0" y1="152.45" x2="496" y2="152.45" stroke="#ae9200" stroke-width="1.4"/><line x1="496" y1="152.95" x2="853.5" y2="152.95" stroke="#7c6600" stroke-width="2"/><polyline fill="none" stroke="#0584b0" stroke-width="1.5" points="35.0,455.30 36.5,455.34 38.0,455.38 39.5,455.42 41.0,455.46 42.5,455.50 44.0,455.54 45.5,455.58 47.0,455.63 48.5,455.67 50.0,455.72 51.5,455.76 53.0,455.81 54.5,455.86 56.0,455.91 57.5,455.96 59.0,456.01 60.5,456.06 62.0,456.11 63.5,456.16 65.0,456.21 66.5,456.27 68.0,456.32 69.5,456.37 71.0,456.43 72.5,456.49 74.0,456.54 75.5,456.60 77.0,456.66 78.5,456.71 80.0,456.77 81.5,456.83 83.0,456.89 84.5,456.95 86.0,457.01 87.5,457.07 89.0,457.14 90.5,457.20 92.0,457.26 93.5,457.32 95.0,457.39 96.5,457.45 98.0,457.51 99.5,457.58 101.0,457.64 102.5,457.71 104.0,457.77 105.5,457.84 107.0,457.91 108.5,457.97 110.0,458.04 111.5,458.11 113.0,458.18 114.5,458.25 116.0,458.32 117.5,458.39 119.0,458.47 120.5,458.54 122.0,458.62 123.5,458.69 125.0,458.77 126.5,458.85 128.0,458.93 129.5,459.01 131.0,459.09 132.5,459.18 134.0,459.27 135.5,459.35 137.0,459.44 138.5,459.53 140.0,459.63 141.5,459.72 143.0,459.82 144.5,459.92 146.0,460.02 147.5,460.12 149.0,460.23 150.5,460.34 152.0,460.45 153.5,460.57 155.0,460.70 156.5,460.84 158.0,460.98 159.5,461.13 161.0,461.28 162.5,461.44 164.0,461.60 165.5,461.76 167.0,461.92 168.5,462.09 170.0,462.25 171.5,462.42 173.0,462.58 174.5,462.74 176.0,462.90 177.5,463.05 179.0,463.20 180.5,463.35 182.0,463.49 183.5,463.63 185.0,463.77 186.5,463.90 188.0,464.04 189.5,464.17 191.0,464.30 192.5,464.44 194.0,464.57 195.5,464.70 197.0,464.84 198.5,464.97 200.0,465.11 201.5,465.25 203.0,465.39 204.5,465.54 206.0,465.69 207.5,465.84 209.0,465.99 210.5,466.15 212.0,466.32 213.5,466.49 215.0,466.66 216.5,466.84 218.0,467.02 219.5,467.20 221.0,467.39 222.5,467.57 224.0,467.77 225.5,467.96 227.0,468.16 228.5,468.35 230.0,468.55 231.5,468.75 233.0,468.95 234.5,469.15 236.0,469.36 237.5,469.56 239.0,469.76 240.5,469.97 242.0,470.17 243.5,470.38 245.0,470.60 246.5,470.81 248.0,471.03 249.5,471.25 251.0,471.47 252.5,471.69 254.0,471.91 255.5,472.13 257.0,472.35 258.5,472.56 260.0,472.78 261.5,472.99 263.0,473.21 264.5,473.42 266.0,473.64 267.5,473.85 269.0,474.07 270.5,474.28 272.0,474.50 273.5,474.71 275.0,474.93 276.5,475.14 278.0,475.36 279.5,475.58 281.0,475.80 282.5,476.02 284.0,476.24 285.5,476.46 287.0,476.68 288.5,476.91 290.0,477.13 291.5,477.36 293.0,477.59 294.5,477.83 296.0,478.06 297.5,478.30 299.0,478.54 300.5,478.78 302.0,479.03 303.5,479.29 305.0,479.55 306.5,479.82 308.0,480.09 309.5,480.37 311.0,480.65 312.5,480.93 314.0,481.21 315.5,481.49 317.0,481.77 318.5,482.05 320.0,482.33 321.5,482.60 323.0,482.86 324.5,483.12 326.0,483.37 327.5,483.62 329.0,483.85 330.5,484.07 332.0,484.29 333.5,484.50 335.0,484.71 336.5,484.91 338.0,485.11 339.5,485.30 341.0,485.49 342.5,485.68 344.0,485.87 345.5,486.05 347.0,486.24 348.5,486.42 350.0,486.60 351.5,486.78 353.0,486.96 354.5,487.14 356.0,487.31 357.5,487.49 359.0,487.66 360.5,487.83 362.0,488.00 363.5,488.17 365.0,488.34 366.5,488.51 368.0,488.67 369.5,488.84 371.0,489.00 372.5,489.17 374.0,489.33 375.5,489.50 377.0,489.67 378.5,489.83 380.0,490.00 381.5,490.17 383.0,490.33 384.5,490.50 386.0,490.67 387.5,490.83 389.0,491.00 390.5,491.16 392.0,491.33 393.5,491.49 395.0,491.66 396.5,491.82 398.0,491.98 399.5,492.15 401.0,492.31 402.5,492.48 404.0,492.64 405.5,492.82 407.0,492.99 408.5,493.16 410.0,493.33 411.5,493.51 413.0,493.68 414.5,493.85 416.0,494.02 417.5,494.19 419.0,494.35 420.5,494.51 422.0,494.67 423.5,494.82 425.0,494.96 426.5,495.10 428.0,495.23 429.5,495.36 431.0,495.48 432.5,495.60 434.0,495.72 435.5,495.83 437.0,495.95 438.5,496.07 440.0,496.18 441.5,496.29 443.0,496.40 444.5,496.51 446.0,496.62 447.5,496.73 449.0,496.83 450.5,496.93 452.0,497.03 453.5,497.13 455.0,497.23 456.5,497.32 458.0,497.41 459.5,497.50 461.0,497.59 462.5,497.67 464.0,497.75 465.5,497.83 467.0,497.90 468.5,497.97 470.0,498.04 471.5,498.10 473.0,498.16 474.5,498.22 476.0,498.27 477.5,498.32 479.0,498.36 480.5,498.41 482.0,498.45 483.5,498.49 485.0,498.54 486.5,498.58 488.0,498.62 489.5,498.66 491.0,498.69 492.5,498.73 494.0,498.77 495.5,498.80 497.0,498.84 498.5,498.87 500.0,498.90 501.5,498.93 503.0,498.96 504.5,498.99 506.0,499.02 507.5,499.05 509.0,499.08 510.5,499.11 512.0,499.14 513.5,499.16 515.0,499.19 516.5,499.22 518.0,499.24 519.5,499.27 521.0,499.29 522.5,499.32 524.0,499.34 525.5,499.37 527.0,499.39 528.5,499.42 530.0,499.44 531.5,499.46 533.0,499.49 534.5,499.51 536.0,499.54 537.5,499.56 539.0,499.58 540.5,499.61 542.0,499.63 543.5,499.66 545.0,499.68 546.5,499.70 548.0,499.73 549.5,499.75 551.0,499.78 552.5,499.80 554.0,499.82 555.5,499.84 557.0,499.87 558.5,499.89 560.0,499.91 561.5,499.93 563.0,499.96 564.5,499.98 566.0,500.00 567.5,500.02 569.0,500.04 570.5,500.06 572.0,500.08 573.5,500.10 575.0,500.12 576.5,500.14 578.0,500.16 579.5,500.18 581.0,500.20 582.5,500.22 584.0,500.24 585.5,500.25 587.0,500.27 588.5,500.29 590.0,500.30 591.5,500.32 593.0,500.33 594.5,500.35 596.0,500.36 597.5,500.38 599.0,500.39 600.5,500.40 602.0,500.42 603.5,500.43 605.0,500.44 606.5,500.46 608.0,500.47 609.5,500.48 611.0,500.50 612.5,500.51 614.0,500.52 615.5,500.54 617.0,500.55 618.5,500.56 620.0,500.57 621.5,500.59 623.0,500.60 624.5,500.61 626.0,500.63 627.5,500.64 629.0,500.65 630.5,500.66 632.0,500.68 633.5,500.69 635.0,500.70 636.5,500.71 638.0,500.72 639.5,500.74 641.0,500.75 642.5,500.76 644.0,500.77 645.5,500.78 647.0,500.79 648.5,500.80 650.0,500.81 651.5,500.82 653.0,500.83 654.5,500.84 656.0,500.85 657.5,500.86 659.0,500.87 660.5,500.88 662.0,500.89 663.5,500.90 665.0,500.91 666.5,500.91 668.0,500.92 669.5,500.93 671.0,500.94 672.5,500.94 674.0,500.95 675.5,500.95 677.0,500.96 678.5,500.97 680.0,500.97 681.5,500.97 683.0,500.98 684.5,500.98 686.0,500.99 687.5,500.99 689.0,500.99 690.5,500.99 692.0,501.00 693.5,501.00 695.0,501.00 696.5,501.00 698.0,501.00 699.5,501.00 701.0,501.00 702.5,501.00 704.0,501.00 705.5,501.00 707.0,501.00 708.5,500.99 710.0,500.99 711.5,500.99 713.0,500.99 714.5,500.98 716.0,500.98 717.5,500.98 719.0,500.98 720.5,500.97 722.0,500.97 723.5,500.96 725.0,500.96 726.5,500.95 728.0,500.95 729.5,500.95 731.0,500.94 732.5,500.93 734.0,500.93 735.5,500.92 737.0,500.92 738.5,500.91 740.0,500.90 741.5,500.90 743.0,500.89 744.5,500.88 746.0,500.88 747.5,500.87 749.0,500.86 750.5,500.85 752.0,500.85 753.5,500.84 755.0,500.83 756.5,500.82 758.0,500.81 759.5,500.80 761.0,500.79 762.5,500.78 764.0,500.76 765.5,500.74 767.0,500.72 768.5,500.70 770.0,500.67 771.5,500.64 773.0,500.61 774.5,500.58 776.0,500.54 777.5,500.51 779.0,500.47 780.5,500.43 782.0,500.40 783.5,500.36 785.0,500.32 786.5,500.28 788.0,500.25 789.5,500.21 791.0,500.17 792.5,500.13 794.0,500.08 795.5,500.03 797.0,499.97 798.5,499.92 800.0,499.88 801.5,499.84 803.0,499.81 804.5,499.80 806.0,499.83 807.5,499.97 809.0,500.16 810.5,500.33 812.0,500.40 813.5,500.24 815.0,499.86 816.5,499.35 818.0,498.84 819.5,498.46 821.0,498.30 822.5,498.41 824.0,498.69 825.5,499.05 827.0,499.41 828.5,499.69 830.0,499.80 831.5,499.71 833.0,499.48 834.5,499.21 836.0,498.96 837.5,498.81 839.0,498.84 840.5,499.03 842.0,499.29 843.5,499.51 845.0,499.60 846.5,499.60 848.0,499.59 849.5,499.58 851.0,499.56 852.5,499.52"/></svg>
  <div class="a" style="left:2px;top:343.3px;width:869px;height:5px;background:linear-gradient(#b8b8b8,#dadada 30%,#dadada 70%,#b8b8b8)"></div>
  <div class="al" style="top:130.9px">10</div><div class="al" style="top:151.2px">0</div><div class="al" style="top:171.5px">−10</div><div class="al" style="top:191.8px">−20</div><div class="al" style="top:212.1px">−30</div><div class="al" style="top:232.4px">−40</div><div class="al" style="top:252.7px">−50</div><div class="al" style="top:273.0px">−60</div><div class="al" style="top:293.3px">−70</div><div class="al" style="top:313.6px">−80</div><div class="al" style="top:333.9px">−90</div><div class="al" style="top:347.2px">180</div><div class="al" style="top:372.6px">135</div><div class="al" style="top:398.0px">90</div><div class="al" style="top:423.4px">45</div><div class="al" style="top:448.8px">0</div><div class="al" style="top:474.2px">−45</div><div class="al" style="top:499.6px">−90</div><div class="al" style="top:525.0px">−135</div><div class="al" style="top:550.4px">−180</div><div class="xl" style="left:26.2px">10 Hz</div><div class="xl" style="left:91.2px">20 Hz</div><div class="xl" style="left:244.9px">100 Hz</div><div class="xl" style="left:310.0px">200 Hz</div><div class="xl" style="left:464.0px">1 kHz</div><div class="xl" style="left:529.8px">2 kHz</div><div class="xl" style="left:684.1px">10 kHz</div><div class="xl" style="left:749.7px">20 kHz</div>
  <!-- plot header -->
  <div class="a" style="left:35px;top:115.5px;width:65.5px;height:16px;border:2px solid #f51a1a"></div>
  <div class="t nt" style="left:35px;top:118px;width:65px;text-align:center;color:#e6e6e6;font-size:9px">Ready</div>
  <div class="t nt" style="left:103px;top:118px;color:#d4aa00;font-size:9px">C1</div>
  <div class="a" style="left:117px;top:116px;width:16.5px;height:15.5px;border:1px solid #1a8cc0"></div>
  <div class="t nt" style="left:118.5px;top:118px;color:#1a9ad6;font-size:9px">C2</div>
  <div class="t" style="left:135px;top:118px;color:#e2e2e2;font-size:9.2px;letter-spacing:-0.05px">151 steps&nbsp; 10 Hz &#8211; 50 kHz | 2025&#8211;12&#8211;30 16:18:26.467</div>
  <!-- plot toolbar icons -->
  <svg class="a" style="left:776px;top:116px" width="56" height="14" viewBox="0 0 56 14">
    <path d="M3,2 L9,8" stroke="#1a6fd0" stroke-width="1.4"/><path d="M2,1.5 L7,2.5 L3,6 Z" fill="#1a6fd0"/>
    <rect x="2" y="9" width="10" height="3" fill="#8a8a8a"/>
    <path d="M22.5,2.5 V8 M31.5,2.5 V8 M22.5,5.2 H31.5" stroke="#1a6fd0" stroke-width="1.3"/>
    <rect x="22.5" y="9.5" width="9.5" height="3" fill="#8a8a8a"/>
    <path d="M42,4.5 H48 M42,12 H48 M45,4.5 V12" stroke="#1a6fd0" stroke-width="1.3"/>
    <rect x="49.5" y="3" width="3" height="9.5" fill="#8a8a8a"/>
  </svg>
  <svg class="a" style="left:836px;top:115px" width="16" height="16" viewBox="0 0 16 16">
    <circle cx="6.2" cy="6.2" r="4.3" fill="#3a6ab0" stroke="#bcd0e8" stroke-width="0.9"/>
    <path d="M9.5,9.5 L13.5,13.5" stroke="#909090" stroke-width="1.6"/>
  </svg>
  <div class="a" style="left:855px;top:116px;width:15px;height:15px;background:#fff;border-radius:2px"></div>
  <svg class="a" style="left:855px;top:116px" width="15" height="15" viewBox="0 0 15 15"><use href="#gear" transform="translate(7.3,7.3) scale(1.1)"/><path d="M9.6,11 H14 L11.8,13.6 Z" fill="#111"/></svg>
  <div class="t nt" style="left:855.5px;top:134px;writing-mode:vertical-rl;color:#cfcfcf;font-size:8.2px;line-height:10px">Magnitude &nbsp;dB</div>
  <div class="t nt" style="left:855.5px;top:350.5px;writing-mode:vertical-rl;color:#cfcfcf;font-size:8.2px;line-height:10px">Phase &nbsp;&deg;</div>
  <!-- X box -->
  <div class="a" style="left:3px;top:560px;width:23px;height:15px;background:#fff;border-radius:2px"></div>
  <div class="t nt" style="left:5.5px;top:562.5px;font-size:10px;color:#222">X</div>
  <div class="a" style="left:15px;top:561px;width:1px;height:13px;background:#ccc"></div>
  <svg class="a" style="left:18px;top:566px" width="6" height="4" viewBox="0 0 6 4"><path d="M0,0 H6 L3,3.5 Z" fill="#111"/></svg>

  <!-- right panel -->
  <div class="a" style="left:871px;top:115px;width:153px;height:461px;background:#f0f0f0"></div>
  <div class="a" style="left:871px;top:114.5px;width:151px;height:1px;background:#e2e2e2"></div>
  <div class="a" style="left:1007px;top:129px;width:1px;height:446px;background:#e6e6e6"></div>
  <svg class="a" style="left:1010px;top:133px" width="9" height="6" viewBox="0 0 9 6"><path d="M0.5,5.5 L4.5,0.5 L8.5,5.5 Z" fill="#a0a0a0"/></svg>
  <svg class="a" style="left:1010px;top:567px" width="9" height="6" viewBox="0 0 9 6"><path d="M0.5,0.5 L4.5,5.5 L8.5,0.5 Z" fill="#a0a0a0"/></svg>
  <svg class="a" style="left:873px;top:119.5px" width="11" height="7" viewBox="0 0 11 7"><path d="M0,2 H6 V0 L11,3.5 L6,7 V5 H0 Z" fill="#6cc060"/></svg>
  <!-- Magnitude group -->
  <div class="grp" style="top:129.5px;height:80px;background:#f0f0f0;border-top:1px solid #fbfbfb;border-left:1px solid #fbfbfb"></div>
  <div class="hdr" style="top:131px"></div>
  <div class="cb" style="left:875px;top:132.5px"></div>
  <div class="t" style="left:888px;top:131.5px">Magnitude</div>
  <div class="gb" style="top:132px"><svg style="position:absolute;left:1px;top:-0.5px" width="12" height="9" viewBox="0 0 12 9"><use href="#gear" transform="translate(5,4.5) scale(0.82)"/><path d="M7.8,4.8 H11 L9.4,6.6 Z" fill="#111"/></svg></div>
  <div class="a" style="left:875px;top:143.5px;width:126px;height:15.5px;background:#cce4f7;border:1px solid #5a9ad8;border-radius:2px"></div>
  <svg class="a" style="left:904px;top:144px" width="11" height="13" viewBox="0 0 11 13"><defs><linearGradient id="gck" x1="0" y1="1" x2="1" y2="0"><stop offset="0" stop-color="#7ddc7a"/><stop offset="1" stop-color="#189a2a"/></linearGradient></defs><path d="M0.3,7.2 L2.6,5.6 L4,8 L9,0.5 L11,1.8 L4.3,11.8 Z" fill="url(#gck)"/></svg>
  <div class="t" style="left:916px;top:146px;font-size:9.8px">Relative to Ref</div>
  <div class="lbl" style="top:161px">Units:</div>
  <div class="lbl" style="top:173px">Top:</div>
  <div class="lbl" style="top:185px">Bottom:</div>
  <div class="dd" style="left:924px;top:160.5px;width:77px;height:10.5px;border-bottom-color:#c8c8c8"><span>dB</span><i></i></div>
  <div class="dd" style="left:924px;top:172.5px;width:77px;height:10.5px;border-bottom-color:#c8c8c8"><span>10 dB</span><i></i></div>
  <div class="dd" style="left:924px;top:184.5px;width:77px;height:10.5px;border-bottom-color:#c8c8c8"><span>&#8722;90 dB</span><i></i></div>
  <div class="t" style="left:920px;top:197px">Spectrum</div>
  <svg class="a" style="left:994px;top:202px" width="5" height="3" viewBox="0 0 5 3"><path d="M0,0 H5 L2.5,3 Z" fill="#111"/></svg>
  <!-- Phase group -->
  <div class="a" style="left:872px;top:210.5px;width:132px;height:52px;border:2px solid #0a0a0a;background:#f0f0f0"></div>
  <div class="hdr" style="top:213px;left:874px;width:128px"></div>
  <div class="cb" style="left:875px;top:213.5px"></div>
  <div class="t" style="left:888px;top:213px">Phase</div>
  <div class="gb" style="top:213.5px"><svg style="position:absolute;left:1px;top:-0.5px" width="12" height="9" viewBox="0 0 12 9"><use href="#gear" transform="translate(5,4.5) scale(0.82)"/><path d="M7.8,4.8 H11 L9.4,6.6 Z" fill="#111"/></svg></div>
  <div class="lbl" style="top:225px">Ref:</div>
  <div class="lbl" style="top:236.5px">Offset:</div>
  <div class="lbl" style="top:248.5px">Range:</div>
  <div class="dd" style="left:924px;top:224.5px;width:77px;height:10.5px;border-bottom-color:#c8c8c8"><span>Channel 1</span><i></i></div>
  <div class="dd" style="left:924px;top:236.5px;width:77px;height:10.5px;border-bottom-color:#c8c8c8"><span>0 &deg;</span><i></i></div>
  <div class="dd" style="left:924px;top:248px;width:77px;height:11px;border-bottom-color:#c8c8c8"><span>360 &deg;</span><i></i></div>
  <!-- Custom One/Two -->
  <div class="a" style="left:873px;top:264.5px;width:129px;height:11px;background:#e9e9e9"></div>
  <div class="cbe" style="left:875px;top:265.5px"></div>
  <div class="t" style="left:888px;top:265px">Custom One</div>
  <div class="gb" style="top:265.5px"><svg style="position:absolute;left:1px;top:-0.5px" width="12" height="9" viewBox="0 0 12 9"><use href="#gear" transform="translate(5,4.5) scale(0.82)"/><path d="M7.8,4.8 H11 L9.4,6.6 Z" fill="#111"/></svg></div>
  <div class="a" style="left:873px;top:279px;width:129px;height:11px;background:#e9e9e9"></div>
  <div class="cbe" style="left:875px;top:280px"></div>
  <div class="t" style="left:888px;top:279.5px">Custom Two</div>
  <div class="gb" style="top:280.5px"><svg style="position:absolute;left:1px;top:-0.5px" width="12" height="9" viewBox="0 0 12 9"><use href="#gear" transform="translate(5,4.5) scale(0.82)"/><path d="M7.8,4.8 H11 L9.4,6.6 Z" fill="#111"/></svg></div>
  <!-- Add Channel -->
  <div class="btn" style="left:873px;top:293.5px;width:129px;height:15px"></div>
  <svg class="a" style="left:908px;top:295px" width="11" height="11" viewBox="0 0 11 11"><path d="M3.6,0 H7.4 V3.6 H11 V7.4 H7.4 V11 H3.6 V7.4 H0 V3.6 H3.6 Z" fill="#4cb838"/></svg>
  <div class="t" style="left:920px;top:295.5px;font-size:9.8px">Add Channel</div>
  <svg class="a" style="left:994px;top:299.5px" width="5" height="3" viewBox="0 0 5 3"><path d="M0,0 H5 L2.5,3 Z" fill="#111"/></svg>
  <!-- Channel 1 -->
  <div class="a" style="left:872px;top:310px;width:132px;height:39px;border:2px solid #ff8c00;background:#f0f0f0"></div>
  <div class="hdr" style="top:312px;left:874px;width:128px"></div>
  <div class="cb" style="left:875px;top:313px"></div>
  <div class="t" style="left:888px;top:312.5px">Channel 1</div>
  <div class="gb" style="top:313px"><svg style="position:absolute;left:1px;top:-0.5px" width="12" height="9" viewBox="0 0 12 9"><use href="#gear" transform="translate(5,4.5) scale(0.82)"/><path d="M7.8,4.8 H11 L9.4,6.6 Z" fill="#111"/></svg></div>
  <div class="lbl" style="top:323.5px">Offset:</div>
  <div class="lbl" style="top:335.5px">Gain:</div>
  <div class="dd" style="left:924px;top:323.5px;width:77px;height:10.5px;border-bottom-color:#c8c8c8"><span>0 V</span><i></i></div>
  <div class="dd" style="left:924px;top:335px;width:77px;height:11px;border-bottom-color:#c8c8c8"><span>1 X</span><i></i></div>
  <!-- Channel 2 -->
  <div class="a" style="left:872px;top:349px;width:132px;height:39px;border:2px solid #1414ff;background:#f0f0f0"></div>
  <div class="hdr" style="top:351.5px;left:874px;width:128px"></div>
  <div class="cb" style="left:875px;top:352.5px"></div>
  <div class="t" style="left:888px;top:352px">Channel 2</div>
  <div class="gb" style="top:352.5px"><svg style="position:absolute;left:1px;top:-0.5px" width="12" height="9" viewBox="0 0 12 9"><use href="#gear" transform="translate(5,4.5) scale(0.82)"/><path d="M7.8,4.8 H11 L9.4,6.6 Z" fill="#111"/></svg></div>
  <div class="lbl" style="top:363px">Offset:</div>
  <div class="lbl" style="top:375px">Gain:</div>
  <div class="dd" style="left:924px;top:363px;width:77px;height:10.5px;border-bottom-color:#c8c8c8"><span>0 V</span><i></i></div>
  <div class="dd" style="left:924px;top:375px;width:77px;height:11px;border-bottom-color:#c8c8c8"><span>1 X</span><i></i></div>

  <!-- status bar -->
  <div class="a" style="left:0;top:576px;width:1024px;height:21px;background:#f0f0f0"></div>
  <div class="sb" style="left:612.5px;width:75.5px"><span style="left:15px">Manual Trigger</span></div>
  <svg class="a" style="left:616px;top:581px" width="9" height="13" viewBox="0 0 9 13"><path d="M3,4 V1.5 a1,1 0 0 1 2,0 V6 L7.5,6.8 a1.2,1.2 0 0 1 1,1.2 V11 L7,12.5 H3.5 L0.8,8.5 a0.9,0.9 0 0 1 1.5,-1 L3,8.3 Z" fill="#e8e8e8" stroke="#666" stroke-width="0.8"/></svg>
  <div class="sb" style="left:692.5px;width:140.5px"><span style="left:16px;letter-spacing:-0.25px">Discovery2 C SN:210321A41D2F</span></div>
  <svg class="a" style="left:695px;top:583px" width="14" height="9" viewBox="0 0 14 9"><path d="M3,1 H13 L11,7 H1 Z" fill="#b8b8b8" stroke="#808080" stroke-width="0.8"/><path d="M1,7 H11 L11,8.5 H1 Z" fill="#909090"/></svg>
  <div class="sb" style="left:838px;width:52px"><span style="left:15px">100 MHz</span></div>
  <svg class="a" style="left:840px;top:582px" width="13" height="11" viewBox="0 0 13 11"><rect x="1" y="3" width="11" height="6" fill="#c0c0c0" stroke="#777" stroke-width="0.8"/><rect x="2" y="1" width="6" height="3" fill="#d8d8d8" stroke="#888" stroke-width="0.6"/></svg>
  <svg class="a" style="left:884.5px;top:589.5px" width="5" height="3" viewBox="0 0 5 3"><path d="M0,0 H5 L2.5,3 Z" fill="#111"/></svg>
  <div class="sb" style="left:895.5px;width:63.5px"><span style="left:11px">Status: OK</span></div>
  <svg class="a" style="left:953px;top:589.5px" width="5" height="3" viewBox="0 0 5 3"><path d="M0,0 H5 L2.5,3 Z" fill="#111"/></svg>
  <div class="sb" style="left:963.5px;width:47.5px"><span style="left:15px">v3.24.4</span></div>
  <svg class="a" style="left:966px;top:582px" width="13" height="11" viewBox="0 0 12 9">
    <path d="M0,0 L2.6,0 L4.2,5.2 L5.4,1.6 L6.6,1.6 L7.8,5.2 L9.4,0 L12,0 L9,9 L6.8,9 L6,6.4 L5.2,9 L3,9 Z" fill="#1b9d45"/>
    <path d="M0,0 L2.6,0 L3.6,3.2 L7,3.6 L9.4,0 L12,0 L10.6,4.2 L1.6,4.4 Z" fill="#8cc63f" opacity="0.85"/>
  </svg>
</div>
</div>
</body></html>
